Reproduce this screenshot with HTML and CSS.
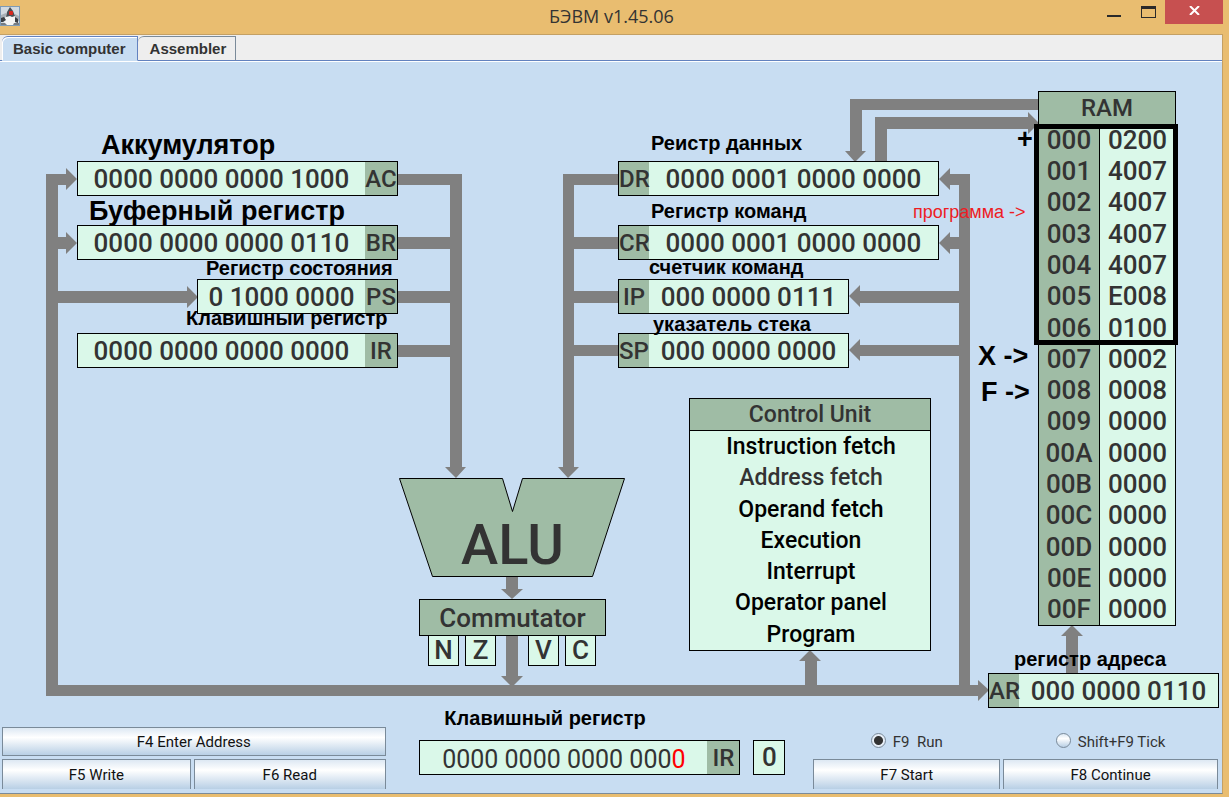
FILE: index.html
```html
<!DOCTYPE html>
<html lang="ru">
<head>
<meta charset="utf-8">
<title>БЭВМ v1.45.06</title>
<link rel="stylesheet" href="styles.css">
</head>
<body>
<div class="window">
  <header class="titlebar">
    <svg class="app-icon" width="20" height="20" viewBox="0 0 20 20" aria-hidden="true">
      <rect width="20" height="20" fill="#7f9bb5"/>
      <rect x="1" y="1" width="18" height="18" fill="#d3dae0"/>
      <path d="M1 9l5-2v6H1zM15 8l4 2v5h-4z" fill="#a9b0b6"/>
      <path d="M6 10h9l1 5-1 4H5l-1-5z" fill="#f4f5f5"/>
      <path d="M10 1l3 4 2 5-3 1-2-1-4 1 1-5z" fill="#4a4f55"/>
      <path d="M1 12l3-1 2 3-3 2H1zM15 11l3 2v4l-3-1z" fill="#3b3f44"/>
      <rect x="9" y="5" width="4" height="4" rx="1" fill="#d8281f"/>
      <path d="M1 17h4l2 2H1zM14 17h5v2h-6z" fill="#777d83"/>
    </svg>
    <h1 class="title">БЭВМ v1.45.06</h1>
    <div class="window-buttons">
      <button class="win-btn" aria-label="Minimize"><svg width="14" height="18" viewBox="0 0 14 18"><path d="M0 12h14v2H0z" fill="#2a2a2a"/></svg></button>
      <button class="win-btn" aria-label="Maximize"><svg width="15" height="12" viewBox="0 0 15 12"><path d="M0 0h15v12H0zM1 3v8h13V3z" fill="#2a2a2a" fill-rule="evenodd"/></svg></button>
      <button class="win-btn win-close" aria-label="Close"><svg width="11" height="9" viewBox="0 0 11 9"><path d="M1 0l9 9M10 0L1 9" stroke="#fff" stroke-width="2"/></svg></button>
    </div>
  </header>

  <div class="client">
    <nav class="tabs" role="tablist">
      <button class="tab tab-active" role="tab" aria-selected="true">Basic computer</button>
      <button class="tab" role="tab" aria-selected="false">Assembler</button>
    </nav>

    <main class="diagram">
      <svg class="wires" width="1222" height="645" viewBox="0 61 1222 645" aria-hidden="true">
        <g fill="#808080">
          <path d="M46 174H66V168L77 179L66 190V185H58V237H66V232L77 243L66 254V249H58V291H187V286L198 297L187 308V303H58V685H978V680L989 690L978 701V696H46Z"/>
          <path d="M398 174H462V467H466L456 478L445 467H450V185H398ZM398 237H450V249H398ZM398 291H450V303H398ZM398 345H450V357H398Z"/>
          <path d="M618 174H563V467H558L568 478L579 467H574V185H618ZM574 237H618V249H574ZM574 291H618V303H574ZM574 345H618V356H574Z"/>
          <path d="M1038 99H850V151H845L855 162L866 151H862V110H1038ZM875 162V117H1028V112L1039 123L1028 134V129H887V162Z"/>
          <path d="M970 174H950V168L939 179L950 190V185H959V237H950V232L939 243L950 254V249H959V291H860V285L849 296L860 307V303H959V345H860V339L849 350L860 361V356H959V696H970Z"/>
          <path d="M506 577H518V589H523L512 599L501 589H506ZM506 636H518V676H523L512 687L501 676H506Z"/>
          <path d="M805 685V661H799L810 650L821 661H817V685ZM1066 673V636H1061L1072 625L1083 636H1078V673Z"/>
        </g>
        <path d="M399.500 478.500H502.500L512.500 511.500L522.500 478.500H624.500L592.500 576.500H432.500Z" fill="#9fbca5" stroke="#000"/>
      </svg>

      <p class="note note-large at-ac-note">Аккумулятор</p>
      <p class="note note-large at-br-note">Буферный регистр</p>
      <p class="note at-ps-note">Регистр состояния</p>
      <p class="note at-ir-note">Клавишный регистр</p>
      <p class="note at-dr-note">Реистр данных</p>
      <p class="note at-cr-note">Регистр команд</p>
      <p class="note at-ip-note">счетчик команд</p>

      <div class="register at-ac"><span class="bits">0000 0000 0000 1000</span><span class="tag">AC</span></div>
      <div class="register at-br"><span class="bits">0000 0000 0000 0110</span><span class="tag">BR</span></div>
      <div class="register at-ps"><span class="bits">0 1000 0000</span><span class="tag">PS</span></div>
      <div class="register at-ir"><span class="bits">0000 0000 0000 0000</span><span class="tag">IR</span></div>

      <div class="register at-dr"><span class="tag tag-left">DR</span><span class="bits">0000 0001 0000 0000</span></div>
      <div class="register at-cr"><span class="tag tag-left">CR</span><span class="bits">0000 0001 0000 0000</span></div>
      <div class="register at-ip"><span class="tag tag-left">IP</span><span class="bits">000 0000 0111</span></div>
      <div class="register at-sp"><span class="tag tag-left">SP</span><span class="bits">000 0000 0000</span></div>
      <div class="register at-ar"><span class="tag tag-left">AR</span><span class="bits">000 0000 0110</span></div>
      <p class="note at-sp-note">указатель стека</p>
      <p class="note at-ar-note">регистр адреса</p>

      <div class="alu">ALU</div>
      <div class="commutator">Commutator</div>
      <div class="flag at-n">N</div>
      <div class="flag at-z">Z</div>
      <div class="flag at-v">V</div>
      <div class="flag at-c">C</div>

      <section class="control-unit">
        <h2 class="control-title">Control Unit</h2>
        <ul class="control-list">
          <li>Instruction fetch</li>
          <li class="muted">Address fetch</li>
          <li>Operand fetch</li>
          <li>Execution</li>
          <li>Interrupt</li>
          <li>Operator panel</li>
          <li>Program</li>
        </ul>
      </section>

      <table class="ram">
        <colgroup><col class="ram-address"><col></colgroup>
        <thead><tr><th colspan="2" scope="colgroup">RAM</th></tr></thead>
        <tbody>
          <tr><th scope="row">000</th><td>0200</td></tr>
          <tr><th scope="row">001</th><td>4007</td></tr>
          <tr><th scope="row">002</th><td>4007</td></tr>
          <tr><th scope="row">003</th><td>4007</td></tr>
          <tr><th scope="row">004</th><td>4007</td></tr>
          <tr><th scope="row">005</th><td>E008</td></tr>
          <tr><th scope="row">006</th><td>0100</td></tr>
          <tr><th scope="row">007</th><td>0002</td></tr>
          <tr><th scope="row">008</th><td>0008</td></tr>
          <tr><th scope="row">009</th><td>0000</td></tr>
          <tr><th scope="row">00A</th><td>0000</td></tr>
          <tr><th scope="row">00B</th><td>0000</td></tr>
          <tr><th scope="row">00C</th><td>0000</td></tr>
          <tr><th scope="row">00D</th><td>0000</td></tr>
          <tr><th scope="row">00E</th><td>0000</td></tr>
          <tr><th scope="row">00F</th><td>0000</td></tr>
        </tbody>
      </table>
      <div class="ram-frame"></div>
      <p class="note note-large at-plus">+</p>
      <p class="note note-program">программа -&gt;</p>
      <p class="note note-large at-x">X -&gt;</p>
      <p class="note note-large at-f">F -&gt;</p>
    </main>

    <footer class="panel">
      <div class="keys keys-left">
        <button class="key key-wide">F4 Enter Address</button>
        <button class="key key-cut">F5 Write</button>
        <button class="key key-cut">F6 Read</button>
      </div>
      <div class="keyboard">
        <div class="keyboard-register">
          <p class="note">Клавишный регистр</p>
          <div class="register"><span class="bits bits-light">0000 0000 0000 000<span class="cursor">0</span></span><span class="tag">IR</span></div>
        </div>
        <output class="carry">0</output>
      </div>
      <div class="keys keys-right">
        <label class="choice"><input type="radio" name="mode" checked>F9&nbsp; Run</label>
        <label class="choice"><input type="radio" name="mode">Shift+F9 Tick</label>
        <button class="key key-cut">F7 Start</button>
        <button class="key key-cut">F8 Continue</button>
      </div>
    </footer>
  </div>
</div>
</body>
</html>
```
FILE: styles.css
```css
:root {
  --sky: #c8ddf2;
  --mint: #daf8e9;
  --green: #9fbca5;
  --ink: #333;
  --gold: #e9bd70;
  --steel: #7a8a99;
}

* { box-sizing: border-box; }

body {
  margin: 0;
  font-family: Roboto, "Liberation Sans", sans-serif;
  color: var(--ink);
}

p, h1, h2, ul { margin: 0; padding: 0; }

button { font-family: inherit; border: 0; padding: 0; }

.window {
  display: flex;
  flex-direction: column;
  min-height: 100vh;
  background: var(--gold);
  padding: 0 6px 3px 0;
}

/* Title bar */
.titlebar {
  display: grid;
  grid-template-columns: 1fr auto 1fr;
  align-items: center;
  height: 34px;
}

.app-icon { margin-top: -2px; }

.title {
  padding-bottom: 2px;
  font: 400 18px "Open Sans", "Noto Sans", sans-serif;
}

.window-buttons {
  display: flex;
  justify-self: end;
  align-self: start;
}

.win-btn {
  display: flex;
  align-items: center;
  justify-content: center;
  width: 34px;
  height: 23px;
  background: none;
}

.win-close {
  width: 58px;
  height: 24px;
  background: #c75050;
  padding-bottom: 3px;
}

.client {
  display: flex;
  flex-direction: column;
  flex: 1;
  border: solid #c4a064;
  border-width: 1px 1px 0 0;
  border-bottom: 1px solid #7a8a99;
  background: var(--sky);
}

/* Tabs */
.tabs {
  display: flex;
  align-items: end;
  height: 26px;
  padding-left: 2px;
  background: #eee;
  box-shadow: inset 0 -1px #6382bf;
}

.tab {
  height: 25px;
  padding: 0 9px 0 12px;
  border: 1px solid var(--steel);
  border-left: 0;
  border-top-left-radius: 6px;
  border-bottom-color: #6382bf;
  background: #eee;
  font: 700 15px "Liberation Sans", sans-serif;
  color: var(--ink);
}

.tab-active {
  padding: 0 11px;
  border-color: #6382bf;
  border-bottom-color: var(--sky);
  background: var(--sky);
  box-shadow: inset 1px 1px #fff;
}

/* Diagram canvas */
.diagram {
  position: relative;
  flex: 1;
  min-height: 645px;
  box-shadow: inset 0 1px #fff;
}

.wires { position: absolute; left: 0; top: 0; }

.note {
  font: 700 20px/24px "Liberation Sans", sans-serif;
  color: #000;
  white-space: nowrap;
}

.diagram .note { position: absolute; }

.diagram .note-large { font-size: 27px; line-height: 32px; }

.diagram .note-program {
  left: 913px;
  top: 139px;
  font-size: 18px;
  font-weight: 400;
  color: #ed1c24;
}

.at-ac-note { left: 101px; top: 68px; }
.at-br-note { left: 89px; top: 134px; }
.at-ps-note { left: 206px; top: 195px; }
.at-ir-note { left: 186px; top: 245px; }
.at-dr-note { left: 651px; top: 70px; }
.at-cr-note { left: 651px; top: 138px; }
.at-ip-note { left: 649px; top: 194px; }
.at-sp-note { left: 653px; top: 251px; }
.at-ar-note { left: 1014px; top: 586px; }
.at-plus { left: 1017px; top: 62px; }
.at-x { left: 978px; top: 279px; }
.at-f { left: 981px; top: 315px; }

.register {
  display: flex;
  height: 35px;
  border: 1px solid #000;
  background: var(--mint);
}

.diagram .register { position: absolute; width: 321px; }

.bits {
  flex: 1;
  font: 500 26px/34px Roboto, sans-serif;
  text-align: center;
  white-space: nowrap;
}

.bits-light { font-size: 25px; font-weight: 400; line-height: 37px; }

.tag {
  width: 32px;
  background: var(--green);
  font: 500 24px/34px Roboto, sans-serif;
  text-align: center;
}

.tag-left { width: 30px; }

.diagram .at-ac { left: 77px; top: 100px; }
.diagram .at-br { left: 77px; top: 164px; }
.diagram .at-ps { left: 197px; top: 218px; width: 201px; }
.diagram .at-ir { left: 77px; top: 272px; }
.diagram .at-dr { left: 618px; top: 100px; }
.diagram .at-cr { left: 618px; top: 164px; }
.diagram .at-ip { left: 618px; top: 218px; width: 231px; }
.diagram .at-sp { left: 618px; top: 272px; width: 231px; }
.diagram .at-ar { left: 988px; top: 612px; width: 231px; }

.alu {
  position: absolute;
  left: 432px;
  top: 452px;
  width: 161px;
  font: 500 56px/64px Roboto, sans-serif;
  text-align: center;
}

.commutator {
  position: absolute;
  left: 419px;
  top: 538px;
  width: 187px;
  height: 37px;
  border: 1px solid #000;
  background: var(--green);
  font: 500 26px/36px Roboto, sans-serif;
  text-align: center;
}

.flag {
  position: absolute;
  top: 574px;
  width: 31px;
  height: 31px;
  border: 1px solid #000;
  background: var(--mint);
  font: 500 26px/29px Roboto, sans-serif;
  text-align: center;
}

.at-n { left: 428px; }
.at-z { left: 465px; }
.at-v { left: 528px; }
.at-c { left: 565px; }

.control-unit {
  position: absolute;
  left: 689px;
  top: 337px;
  display: flex;
  flex-direction: column;
  width: 242px;
  height: 253px;
  border: 1px solid #000;
  background: var(--mint);
  text-align: center;
}

.control-title {
  border-bottom: 1px solid #000;
  background: var(--green);
  font: 500 23px/31px Roboto, sans-serif;
}

.control-list {
  display: grid;
  grid-auto-rows: 1fr;
  flex: 1;
  padding-left: 2px;
  list-style: none;
  font: 500 23px/31px Roboto, sans-serif;
  color: #000;
}

.muted { color: var(--ink); }

.ram {
  position: absolute;
  left: 1038px;
  top: 30px;
  width: 138px;
  height: 535px;
  border: 1px solid #000;
  border-spacing: 0;
  table-layout: fixed;
  background: var(--mint);
  font: 500 26px/30px Roboto, sans-serif;
  text-align: center;
}

.ram-address { width: 61px; }

.ram th, .ram td { padding: 0; font-weight: 500; }

.ram th { background: var(--green); }

.ram thead th { height: 32px; font-size: 24px; }

.ram tbody th { border-right: 1px solid #000; }

.ram-frame {
  position: absolute;
  left: 1034px;
  top: 63px;
  width: 144px;
  height: 221px;
  border: 5px solid #000;
}

/* Bottom panel */
.panel {
  display: grid;
  grid-template-columns: 384fr 372fr 405fr;
  column-gap: 28px;
  align-items: end;
  padding: 0 4px 4px 2px;
}

.keys { display: grid; gap: 3px; }

.keys-left { grid-template-columns: 189fr 192fr; }

.keys-right { grid-template-columns: 187fr 215fr; }

.key {
  height: 30px;
  border: 1px solid var(--steel);
  background: linear-gradient(#dde8f3, #fff 35%, #b8cfe5);
  font-size: 15px;
  color: #111;
}

.key-wide { grid-column: 1 / -1; height: 29px; }

.key-cut { border-bottom: 0; }

.choice {
  display: flex;
  align-items: center;
  justify-content: center;
  gap: 7px;
  height: 29px;
  font-size: 15px;
}

.choice input {
  appearance: none;
  width: 15px;
  height: 15px;
  margin: 0 0 3px;
  border: 1px solid var(--steel);
  border-radius: 50%;
  background: linear-gradient(#dde8f3, #fff 35%, #b8cfe5);
}

.choice input:checked {
  background: radial-gradient(circle, #333 4px, #e6eef7 5px);
}

.keyboard {
  display: flex;
  align-items: end;
  justify-content: end;
  gap: 13px;
  padding-bottom: 14px;
}

.keyboard-register { display: grid; gap: 10px; width: 321px; }

.keyboard-register .note { padding-left: 25px; }

.carry {
  width: 32px;
  height: 35px;
  border: 1px solid #000;
  background: var(--mint);
  font: 500 26px/33px Roboto, sans-serif;
  text-align: center;
}

.cursor { color: #f00; }
```
